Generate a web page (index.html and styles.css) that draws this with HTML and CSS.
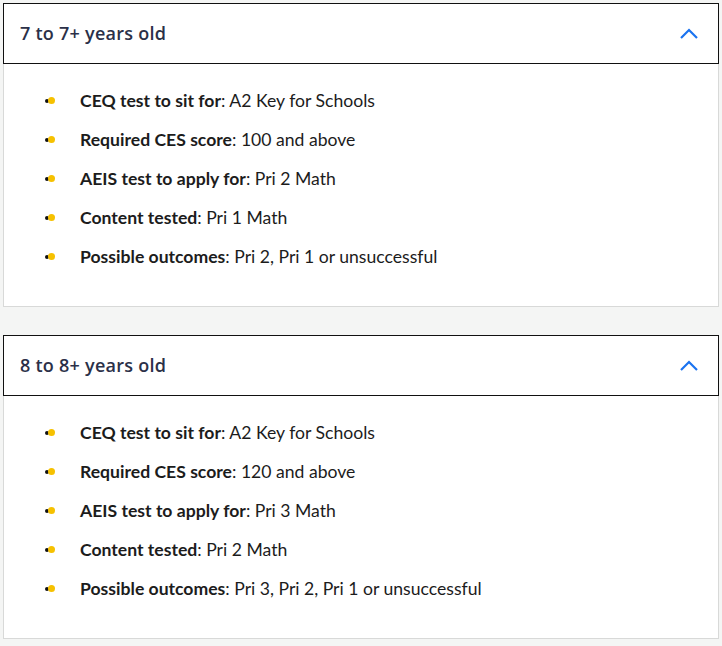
FILE: index.html
```html
<!DOCTYPE html>
<html>
<head>
<meta charset="utf-8">
<link rel="stylesheet" href="styles.css">
</head>
<body>
<div class="page">
  <section class="card">
    <div class="head">
      <span class="title">7 to 7+ years old</span>
      <svg class="chev" width="20" height="12" viewBox="0 0 20 12"><path d="M2 10 L10 2 L18 10" fill="none" stroke="#1a73f0" stroke-width="2.2"/></svg>
    </div>
    <ul class="list">
      <li><span class="dot"></span><span><b>CEQ test to sit for</b>: A2 Key for Schools</span></li>
      <li><span class="dot"></span><span><b>Required CES score</b>: 100 and above</span></li>
      <li><span class="dot"></span><span><b>AEIS test to apply for</b>: Pri 2 Math</span></li>
      <li><span class="dot"></span><span><b>Content tested</b>: Pri 1 Math</span></li>
      <li><span class="dot"></span><span><b>Possible outcomes</b>: Pri 2, Pri 1 or unsuccessful</span></li>
    </ul>
  </section>
  <section class="card">
    <div class="head">
      <span class="title">8 to 8+ years old</span>
      <svg class="chev" width="20" height="12" viewBox="0 0 20 12"><path d="M2 10 L10 2 L18 10" fill="none" stroke="#1a73f0" stroke-width="2.2"/></svg>
    </div>
    <ul class="list">
      <li><span class="dot"></span><span><b>CEQ test to sit for</b>: A2 Key for Schools</span></li>
      <li><span class="dot"></span><span><b>Required CES score</b>: 120 and above</span></li>
      <li><span class="dot"></span><span><b>AEIS test to apply for</b>: Pri 3 Math</span></li>
      <li><span class="dot"></span><span><b>Content tested</b>: Pri 2 Math</span></li>
      <li><span class="dot"></span><span><b>Possible outcomes</b>: Pri 3, Pri 2, Pri 1 or unsuccessful</span></li>
    </ul>
  </section>
</div>
</body>
</html>
```
FILE: styles.css
```css
html, body { margin: 0; padding: 0; background: #f4f5f4; }
.page { padding: 3px 3px 0 3px; display: flex; flex-direction: column; gap: 28px; width: 716px; }
.card { background: #fff; }
.head {
  height: 59px; border: 1px solid #111; display: flex; align-items: center;
  justify-content: space-between; padding: 0 19px 0 16px; box-sizing: content-box;
}
.title { font-family: "Open Sans", sans-serif; font-weight: 600; font-size: 18px; letter-spacing: 0.25px; color: #2b3048; position: relative; top: -1px; }
.chev { display: block; }
.list {
  margin: 0; list-style: none; padding: 17px 0 30px 41px;
  border: 1px solid #d8d9d8; border-top: none;
}
.list li {
  display: flex; align-items: center; height: 39px;
  font-family: Lato, sans-serif; font-size: 17.6px; color: #1c1c1c;
}
.list b { font-weight: 700; }
.dot { position: relative; width: 11px; height: 7px; margin-right: 24px; flex: none; }
.dot::before { content: ""; position: absolute; left: 0; top: 1.5px; width: 4px; height: 4px; border-radius: 50%; background: #111; }
.dot::after { content: ""; position: absolute; left: 3px; top: 0; width: 7px; height: 7px; border-radius: 50%; background: #f6c100; }
```
